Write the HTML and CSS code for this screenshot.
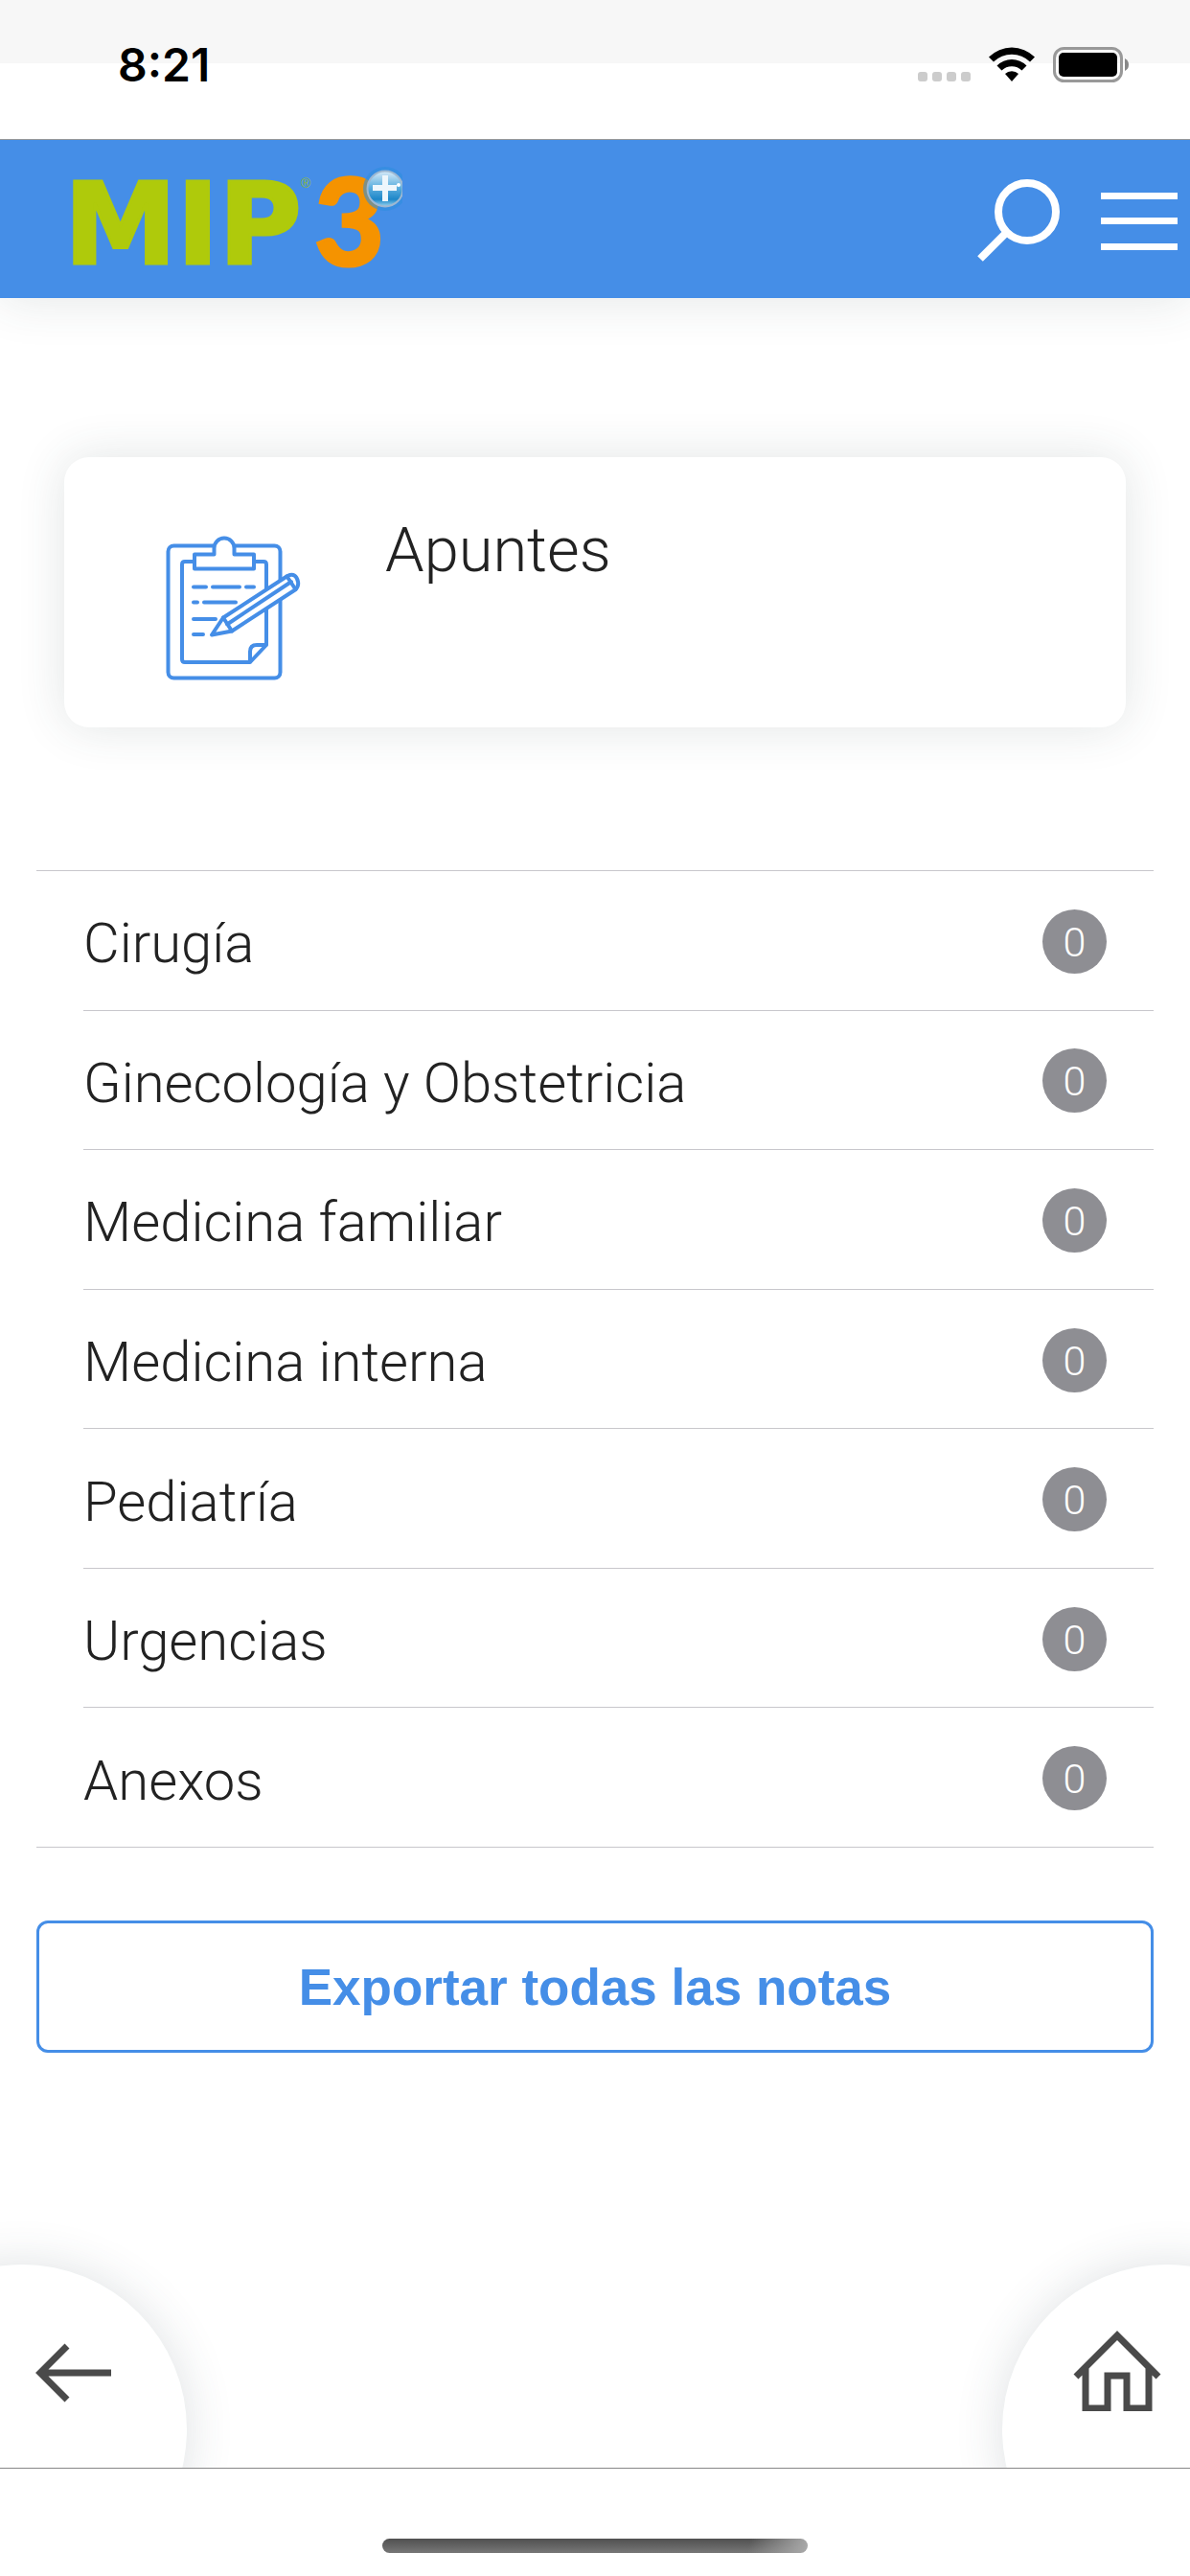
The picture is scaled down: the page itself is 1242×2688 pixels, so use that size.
FILE: index.html
```
<!DOCTYPE html>
<html lang="es">
<head>
<meta charset="utf-8">
<meta name="viewport" content="width=device-width, initial-scale=1">
<title>MIP3 - Apuntes</title>
<link rel="stylesheet" href="styles.css">
</head>
<body>
<div class="status">
	<span class="time">8:21</span>
	<div class="signals">
		<svg class="dots" viewBox="0 0 55 12" width="55" height="12">
			<rect x="0" y="1" width="10" height="10" rx="3"/>
			<rect x="15" y="1" width="10" height="10" rx="3"/>
			<rect x="30" y="1" width="10" height="10" rx="3"/>
			<rect x="45" y="1" width="10" height="10" rx="3"/>
		</svg>
		<svg viewBox="0 0 48 36" width="48" height="36">
			<path d="M0 10.5A34 34 0 0 1 48 10.5L43 15.5A27 27 0 0 0 5 15.5Z"/>
			<path d="M8.500 19.500A22 22 0 0 1 39.500 19.500L34.500 24.500A15 15 0 0 0 13.500 24.500Z"/>
			<path d="M17 28A10 10 0 0 1 31 28L24 36Z"/>
		</svg>
		<svg viewBox="0 0 80 38" width="80" height="38">
			<rect x="1.500" y="1.500" width="70" height="34" rx="10" fill="none" stroke="#999" stroke-width="3"/>
			<rect x="6" y="6" width="61" height="25" rx="5"/>
			<path d="M75 12q4 2 4 6.500t-4 6.500z" fill="#888"/>
		</svg>
	</div>
</div>

<header class="header">
	<a class="brand" href="#">
		<svg viewBox="0 0 360 166" width="360" height="166">
			<defs>
				<linearGradient id="ball" x1="0" y1="0" x2="0" y2="1">
					<stop offset="0" stop-color="#d8ebf8"/>
					<stop offset="0.45" stop-color="#5fb0e0"/>
					<stop offset="0.8" stop-color="#1c86c8"/>
					<stop offset="1" stop-color="#9ad4f0"/>
				</linearGradient>
			</defs>
			<text class="mip" x="7" y="130">MIP</text>
			<text class="reg" x="254" y="51">®</text>
			<text class="three" x="268" y="132">3</text>
			<circle cx="342" cy="52" r="23" fill="#2f8de0" opacity="0.6"/>
			<circle cx="342" cy="52" r="18.500" fill="url(#ball)" stroke="#9db8d2" stroke-width="2"/>
			<path d="M342 38V65M329 51H354" stroke="#eef6fc" stroke-width="6"/>
			<circle cx="356" cy="48" r="2" fill="#fff"/>
		</svg>
	</a>
	<nav class="tools">
		<button type="button" aria-label="Buscar">
			<svg viewBox="0 0 90 90" width="90" height="90" fill="none" stroke="#fff" stroke-width="8">
				<circle cx="53" cy="35" r="30"/>
				<path d="M32 56L4 84"/>
			</svg>
		</button>
		<button type="button" aria-label="Menú">
			<svg viewBox="0 0 80 60" width="80" height="60" fill="#fff">
				<rect y="0" width="80" height="7"/>
				<rect y="26" width="80" height="7"/>
				<rect y="53" width="80" height="7"/>
			</svg>
		</button>
	</nav>
</header>

<main class="page">
	<section class="card">
		<svg class="notes" viewBox="172 558 144 152" width="144" height="152">
			<rect x="175.500" y="568.500" width="117" height="138" rx="6"/>
			<path d="M202 585H193q-3 0-3 3V687q0 3 3 3H261L278 672V588q0-3-3-3H266M261 690V679q0-7 7-7H278"/>
			<path class="fill" d="M203 577.500H223.500V571a10.500 10.500 0 0 1 21 0V577.500H265V592.500H203Z"/>
			<path d="M202 611.500H215M222 611.500H250M257 611.500H265M202 627.500H206M213 627.500H246M202 645H225M202 661H212"/>
			<path class="fill" d="M221 661.500L233 643.500L300 600Q309 596 311 606Q312 611 308 614.500L242 657.500Z"/>
			<path d="M233 643.500L242 657.500M237 650.500L304 606M299.500 600.500L308.500 614"/>
		</svg>
		<h1>Apuntes</h1>
	</section>

	<ul class="list">
		<li><a href="#"><span>Cirugía</span><b>0</b></a></li>
		<li><a href="#"><span>Ginecología y Obstetricia</span><b>0</b></a></li>
		<li><a href="#"><span>Medicina familiar</span><b>0</b></a></li>
		<li><a href="#"><span>Medicina interna</span><b>0</b></a></li>
		<li><a href="#"><span>Pediatría</span><b>0</b></a></li>
		<li><a href="#"><span>Urgencias</span><b>0</b></a></li>
		<li><a href="#"><span>Anexos</span><b>0</b></a></li>
	</ul>

	<button type="button" class="export">Exportar todas las notas</button>
</main>

<footer class="footer">
	<div class="corners">
		<a class="round back" href="#" aria-label="Atrás">
			<svg viewBox="0 0 80 62" width="80" height="62">
				<path d="M33 3L5 31L33 59M5 31H79"/>
			</svg>
		</a>
		<a class="round home" href="#" aria-label="Inicio">
			<svg viewBox="0 0 92 84" width="92" height="84">
				<path d="M3 48L46 5L89 48M13 39V81H36V47H56V81H79V39"/>
			</svg>
		</a>
	</div>
	<div class="bar"><span></span></div>
</footer>
</body>
</html>
```
FILE: styles.css
```
* { box-sizing: border-box; }
html, body { margin: 0; padding: 0; }
body { display: flex; flex-direction: column; min-height: 100vh; background: #FFF; color: #222; font-family: Roboto, 'Liberation Sans', sans-serif; font-weight: 300; }
svg { display: block; }
a { color: inherit; text-decoration: none; }
button { margin: 0; padding: 0; border: 0; background: none; cursor: pointer; }
h1 { margin: 0; font-size: 65px; line-height: 74px; font-weight: 300; }

/* STATUS */
.status { position: relative; z-index: 1; display: flex; justify-content: space-between; height: 146px; margin-bottom: -1px; padding: 49px 63px 0 123px; border-bottom: 1px solid #999; background: linear-gradient(#F7F7F7 66px, #FFF 66px); }
.time { font: 600 48px/38px Inter, sans-serif; color: #000; }
.signals { display: flex; gap: 19px; align-items: flex-start; }
.dots { margin: 25px 0 0; fill: #CCC; }

/* HEADER */
.header { display: flex; justify-content: space-between; align-items: center; height: 166px; padding: 0 13px 0 60px; background: #458EE7; box-shadow: 0 0 50px rgba(50,70,70,0.14); }
.mip { font: bold 118px 'DejaVu Sans', sans-serif; fill: #AFCA0B; stroke: #AFCA0B; stroke-width: 3; }
.three { font: 900 126px Lato, sans-serif; fill: #F59300; stroke: #F59300; stroke-width: 3; }
.reg { font: 400 14px 'Liberation Sans', sans-serif; fill: #8FB93A; }
.tools { display: flex; align-items: center; gap: 40px; padding-top: 6px; }

/* CONTENT */
.page { flex: 1; padding: 0 38px; }
.card { display: flex; margin: 166px 29px 0; min-height: 281px; padding: 60px 86px 48px 105px; border-radius: 26px; background: #FFF; box-shadow: 0 0 50px rgba(50,70,70,0.14); }
.notes { margin: 22px 86px 0 0; fill: none; stroke: #458EE7; stroke-width: 4; stroke-linejoin: round; stroke-linecap: round; }
.notes .fill { fill: #FFF; }
.list { display: flex; flex-direction: column; min-height: 1020px; margin: 149px 0 0; padding: 0; border-top: 1px solid #C8C7CC; border-bottom: 1px solid #C8C7CC; list-style-type: none; }
.list li { display: flex; flex: 1; margin-left: 49px; }
.list li + li { border-top: 1px solid #C8C7CC; }
.list a { display: flex; flex: 1; justify-content: space-between; align-items: center; padding: 2px 49px 0 0; font-size: 58px; line-height: 68px; }
.list span { padding-top: 4px; }
.list b { width: 67px; height: 67px; border-radius: 50%; background: #8E8E93; color: #FFF; font-size: 43px; font-weight: 300; text-align: center; }
.export { display: block; width: 100%; height: 138px; margin-top: 76px; border: 3px solid #458EE7; border-radius: 12px; color: #458EE7; font: bold 53px 'Liberation Sans', Arial, sans-serif; }
.export:hover { background: #458EE7; color: #FFF; }

/* FOOTER */
.corners { display: flex; justify-content: space-between; align-items: flex-start; height: 272px; padding-top: 60px; overflow: hidden; }
.round { display: flex; flex: none; width: 344px; height: 344px; border-radius: 50%; background: #FFF; box-shadow: 0 0 50px rgba(50,70,80,0.16); }
.round svg { fill: none; stroke: #4A4A4A; stroke-width: 7; }
.back { margin-left: -149px; padding: 82px 0 0 186px; }
.home { margin-right: -148px; padding: 69px 0 0 74px; }
.bar { height: 113px; padding-top: 73px; border-top: 1px solid #888; background: #FFF; }
.bar span { display: block; width: 444px; height: 15px; margin: 0 auto; border-radius: 8px; background: linear-gradient(100deg, transparent 86%, #AAA), linear-gradient(#505050, #777); }
```
